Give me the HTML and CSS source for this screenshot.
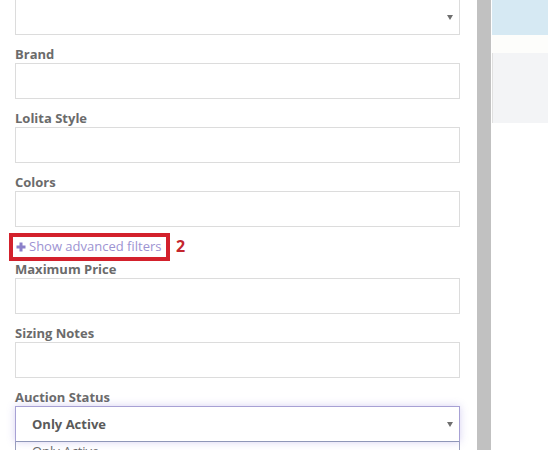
FILE: index.html
```html
<!DOCTYPE html>
<html>
<head>
<meta charset="utf-8">
<link rel="stylesheet" href="styles.css">
</head>
<body>
<div class="page">
  <div class="panel">
    <div class="select first"><span class="caret"></span></div>
    <div class="field"><label>Brand</label><div class="input"></div></div>
    <div class="field"><label>Lolita Style</label><div class="input"></div></div>
    <div class="field"><label>Colors</label><div class="input"></div></div>
    <div class="adv">
      <a class="adv-link"><svg class="plus" width="10" height="10" viewBox="0 0 10 10"><path d="M5 0.5V9.5M0.5 5H9.5" stroke="#8c80c9" stroke-width="3"/></svg>Show advanced filters</a>
      <span class="mark-box"></span>
      <span class="mark-num">2</span>
    </div>
    <div class="field tight"><label>Maximum Price</label><div class="input"></div></div>
    <div class="field"><label>Sizing Notes</label><div class="input"></div></div>
    <div class="field"><label>Auction Status</label>
      <div class="select focus"><span class="sel-text">Only Active</span><span class="caret"></span></div>
      <div class="options"><div class="opt">Only Active</div></div>
    </div>
  </div>
  <div class="scrollbar"></div>
  <div class="right">
    <div class="band"></div>
    <div class="gap"></div>
    <div class="box"></div>
  </div>
</div>
</body>
</html>
```

FILE: styles.css
```css
html, body {
  margin: 0;
  padding: 0;
  background: #fff;
}
.page {
  display: flex;
  height: 450px;
  overflow: hidden;
  font-family: "Open Sans", "Liberation Sans", sans-serif;
}
.panel {
  position: relative;
  width: 477px;
  box-sizing: border-box;
  padding: 0 17px 0 15px;
  flex: none;
}
.select, .input {
  position: relative;
  height: 36px;
  box-sizing: border-box;
  border: 1px solid #dcdcdc;
  background: #fff;
}
.select.first {
  margin-top: -1px;
}
.caret {
  position: absolute;
  right: 6px;
  top: 15px;
  width: 0;
  height: 0;
  border-left: 3px solid transparent;
  border-right: 3px solid transparent;
  border-top: 5px solid #6f6f6f;
}
.field {
  margin-top: 9px;
}
.field.tight {
  margin-top: 5px;
}
.field label {
  display: block;
  font-size: 13px;
  font-weight: 700;
  line-height: 18px;
  color: #6b6b6b;
  padding-top: 1px;
  margin-bottom: 0;
}
.adv {
  position: relative;
  margin-top: 9px;
  height: 18px;
  line-height: 18px;
}
.adv-link {
  display: inline-flex;
  align-items: center;
  font-size: 13px;
  color: #9d93d2;
}
.plus {
  margin: 0 3px 0 1px;
  position: relative;
  top: 1px;
}
.mark-box {
  position: absolute;
  left: -6px;
  top: -3px;
  width: 161px;
  height: 28px;
  box-sizing: border-box;
  border: 4px solid #d3212c;
}
.mark-num {
  position: absolute;
  left: 161px;
  top: 1px;
  font-size: 16px;
  font-weight: 700;
  color: #c4262e;
  line-height: 18px;
}
.select.focus {
  border-color: #a7a1d4;
  border-bottom-color: #8e96b8;
  box-shadow: 0 0 8px rgba(110, 95, 210, 0.28);
  display: flex;
  align-items: center;
  padding-left: 16px;
}
.sel-text {
  font-size: 13px;
  font-weight: 700;
  color: #5a5a5a;
}
.options {
  border-left: 1px solid #9aa0bd;
  border-right: 1px solid #9aa0bd;
  background: #fff;
  height: 30px;
  padding-left: 16px;
}
.opt {
  font-size: 13px;
  color: #6a6a6a;
  line-height: 18px;
}
.scrollbar {
  width: 14px;
  flex: none;
  background: #c1c1c1;
}
.right {
  flex: 1;
  margin-left: 1px;
}
.band {
  height: 35px;
  background: #d6e9f3;
}
.gap {
  height: 18px;
  background: #fdfdfb;
}
.box {
  height: 70px;
  background: #f3f4f6;
  border-left: 1px solid #e0e0e0;
}
```
